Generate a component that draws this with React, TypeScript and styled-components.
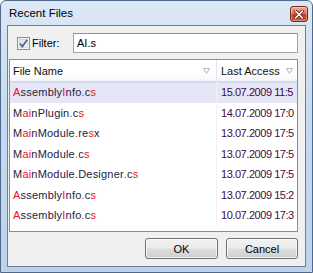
import styled, { createGlobalStyle } from 'styled-components'

const GlobalStyle = createGlobalStyle`
  html, body {
    margin: 0;
    padding: 0;
    background: #ffffff;
  }
  body {
    font-family: "Liberation Sans", Arial, sans-serif;
    font-size: 11px;
  }
`

const Window = styled.div`
  width: 313px;
  height: 273px;
  box-sizing: border-box;
  border: 1px solid #50698a;
  border-radius: 6px 6px 0 0;
  background: linear-gradient(180deg, #dbe8f6 0%, #c6daf0 40%, #bdd3ec 100%);
  padding: 0 6px 5px 6px;
  display: flex;
  flex-direction: column;
`

const TitleBar = styled.div`
  height: 24px;
  display: flex;
  align-items: flex-start;
  justify-content: space-between;
`

const Title = styled.div`
  font-size: 11.5px;
  color: #000;
  padding: 6px 0 0 2px;
`

const CloseButton = styled.button`
  width: 18px;
  height: 16px;
  margin: 5px -2px 0 0;
  padding: 0;
  border: 1px solid #6e2a1c;
  border-radius: 3px;
  background: linear-gradient(180deg, #eeb0a0 0%, #d8705a 45%, #c3381f 55%, #d8563a 100%);
  display: flex;
  align-items: center;
  justify-content: center;
  box-shadow: inset 0 0 0 1px rgba(255, 255, 255, 0.35);
`

const Client = styled.div`
  flex: 1;
  border: 1px solid #6c7f96;
  background: #f0f0f0;
  display: flex;
  flex-direction: column;
  padding: 7px 7px 7px 0;
`

const FilterRow = styled.div`
  height: 20px;
  display: flex;
  align-items: center;
  padding-left: 9px;
`

const CheckLabel = styled.label`
  display: flex;
  align-items: center;
  gap: 2px;
  color: #000;
`

const FilterInput = styled.div`
  margin-left: auto;
  width: 225px;
  height: 20px;
  box-sizing: border-box;
  border: 1px solid #a0a3a9;
  border-top-color: #8e9197;
  background: #fff;
  padding: 0 3px;
  display: flex;
  align-items: center;
  color: #000;
`

const List = styled.div`
  margin: 6px 0 6px 1px;
  height: 173px;
  box-sizing: border-box;
  border: 1px solid #8a8d93;
  background: #fff;
  overflow: hidden;
`

const Grid = styled.div`
  display: grid;
  grid-template-columns: 207px 1fr;
`

const HeaderCell = styled.div<{ $pad: number }>`
  height: 22px;
  box-sizing: border-box;
  display: flex;
  align-items: center;
  justify-content: space-between;
  padding: 0 ${p => p.$pad}px 0 ${p => (p.$pad === 6 ? 3 : 4)}px;
  background: linear-gradient(180deg, #ffffff 0%, #ffffff 55%, #f6f7f9 100%);
  border-bottom: 1px solid #d6d9de;
  color: #101010;
  &:first-child {
    border-right: 1px solid #e3e5e8;
  }
`

const Row = styled.div<{ $selected?: boolean }>`
  display: grid;
  grid-template-columns: 207px 1fr;
  height: 20.5px;
  align-items: center;
  background: ${p => (p.$selected ? '#e6e6f7' : 'transparent')};
  box-shadow: ${p => (p.$selected ? 'inset 0 1px 0 #d3dbf0' : 'none')};
`

const NameCell = styled.div`
  height: 100%;
  display: flex;
  align-items: center;
  padding-left: 3px;
  border-right: 1px solid #f1f1f1;
  color: #1c2242;
  letter-spacing: 0.2px;
  white-space: nowrap;
`

const DateCell = styled.div`
  padding: 0 4px;
  color: #420c44;
  letter-spacing: -0.45px;
  white-space: nowrap;
`

const Hit = styled.span`
  color: #f0101c;
`

const Buttons = styled.div`
  display: flex;
  justify-content: flex-end;
  gap: 8px;
`

const Button = styled.button<{ $w: number }>`
  width: ${p => p.$w}px;
  height: 21px;
  box-sizing: border-box;
  border: 1px solid #707070;
  border-radius: 3px;
  background: linear-gradient(180deg, #f2f2f2 0%, #ebebeb 48%, #dddddd 52%, #cfcfcf 100%);
  box-shadow: inset 0 0 0 1px rgba(255, 255, 255, 0.7);
  font-family: "Liberation Sans", Arial, sans-serif;
  font-size: 11px;
  color: #000;
  padding: 0;
`

function CheckBox() {
  return (
    <svg width="13" height="13" viewBox="0 0 13 13">
      <defs>
        <linearGradient id="cbg" x1="0" y1="0" x2="1" y2="1">
          <stop offset="0" stopColor="#dcdcdc" />
          <stop offset="1" stopColor="#fbfbfb" />
        </linearGradient>
      </defs>
      <rect x="0.5" y="0.5" width="12" height="12" fill="#f4f4f4" stroke="#8f8f8f" />
      <rect x="2.5" y="2.5" width="8" height="8" fill="url(#cbg)" stroke="#c8c8c8" strokeWidth="0.6" />
      <path d="M3 6.5 L5.4 9.6 L10.2 2.8" fill="none" stroke="#4f6390" strokeWidth="1.7" />
    </svg>
  )
}

function SortGlyph() {
  return (
    <svg width="7" height="6" viewBox="0 0 7 6">
      <polygon points="0.5,0.5 6.5,0.5 3.5,5.5" fill="none" stroke="#b3b6ba" strokeWidth="1" />
    </svg>
  )
}

function CloseGlyph() {
  return (
    <svg width="10" height="9" viewBox="0 0 10 9">
      <path d="M1.5 1 L8.5 8 M8.5 1 L1.5 8" stroke="#5a2418" strokeWidth="3" strokeLinecap="round" />
      <path d="M1.5 1 L8.5 8 M8.5 1 L1.5 8" stroke="#ffffff" strokeWidth="1.6" strokeLinecap="round" />
    </svg>
  )
}

// name split into plain / matched parts: even index plain, odd index matched
// dates are shown as the narrow column shows them
const files: { parts: string[]; date: string }[] = [
  { parts: ['', 'A', 'ssembly', 'I', 'nfo', '.', 'c', 's'], date: '15.07.2009 11:5' },
  { parts: ['M', 'ai', 'nPlugin', '.', 'c', 's'], date: '14.07.2009 17:0' },
  { parts: ['M', 'ai', 'nModule', '.', 're', 's', 'x'], date: '13.07.2009 17:5' },
  { parts: ['M', 'ai', 'nModule', '.', 'c', 's'], date: '13.07.2009 17:5' },
  { parts: ['M', 'ai', 'nModule.Designer', '.', 'c', 's'], date: '13.07.2009 17:5' },
  { parts: ['', 'A', 'ssembly', 'I', 'nfo', '.', 'c', 's'], date: '13.07.2009 15:2' },
  { parts: ['', 'A', 'ssembly', 'I', 'nfo', '.', 'c', 's'], date: '10.07.2009 17:3' },
]

export default function App() {
  return (
    <>
      <GlobalStyle />
      <Window>
        <TitleBar>
          <Title>Recent Files</Title>
          <CloseButton aria-label="Close">
            <CloseGlyph />
          </CloseButton>
        </TitleBar>
        <Client>
          <FilterRow>
            <CheckLabel>
              <CheckBox />
              Filter:
            </CheckLabel>
            <FilterInput>AI.s</FilterInput>
          </FilterRow>
          <List>
            <Grid>
              <HeaderCell $pad={6}>
                File Name
                <SortGlyph />
              </HeaderCell>
              <HeaderCell $pad={4}>
                Last Access
                <SortGlyph />
              </HeaderCell>
            </Grid>
            {files.map((f, i) => (
              <Row key={i} $selected={i === 0}>
                <NameCell>
                  {f.parts.map((p, j) => (j % 2 === 1 ? <Hit key={j}>{p}</Hit> : <span key={j}>{p}</span>))}
                </NameCell>
                <DateCell>{f.date}</DateCell>
              </Row>
            ))}
          </List>
          <Buttons>
            <Button $w={73}>OK</Button>
            <Button $w={72}>Cancel</Button>
          </Buttons>
        </Client>
      </Window>
    </>
  )
}
